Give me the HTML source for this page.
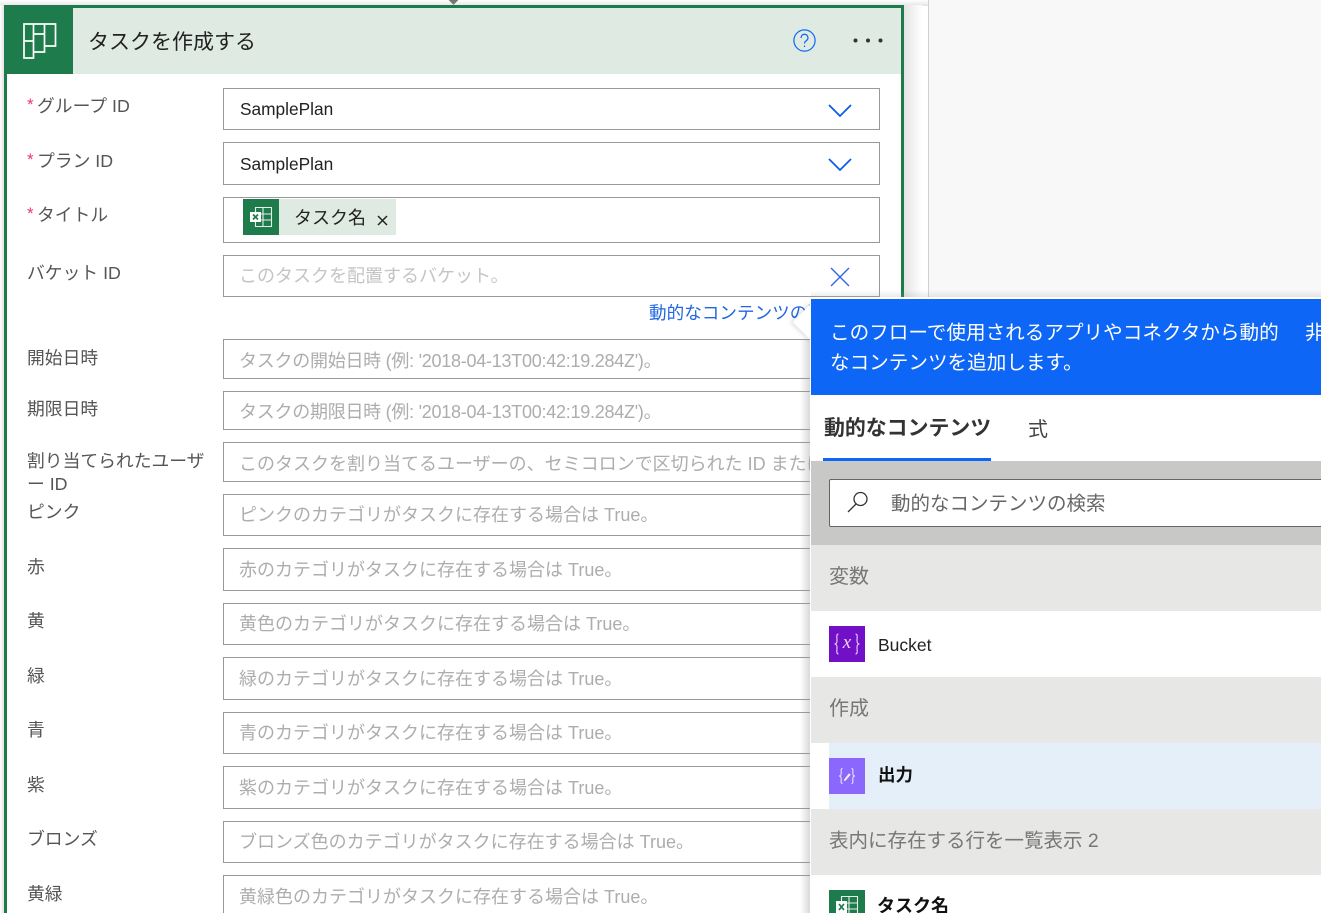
<!DOCTYPE html>
<html lang="ja"><head><meta charset="utf-8">
<style>
html,body{margin:0;padding:0;width:1321px;height:913px;overflow:hidden}
#r{position:absolute;left:0;top:0;width:1321px;height:913px;overflow:hidden;background:#fff;font-family:"Liberation Sans","Noto Sans CJK JP",sans-serif;font-size:17px;color:#333}
div,span.a,svg{position:absolute;box-sizing:border-box}
.t{white-space:nowrap;line-height:22px}
.l{left:27px;color:#555;font-size:17.800px}
.s{color:#e8386f;font-size:17px;left:27px}
.i{left:223px;width:657px;border:1px solid #999;background:#fff}
.p{left:239px;color:#adadad;font-size:18px;white-space:nowrap;line-height:22px}
.sec{left:811px;width:510px;height:66px;background:#e7e8e5}
.sect{left:829px;color:#777;font-size:20px;white-space:nowrap;line-height:24px}
</style></head><body><div id="r">
<div style="left:929px;top:0;width:392px;height:913px;background:#f8f8f8"></div>
<div style="left:928px;top:0;width:1px;height:913px;background:#d0d0d0"></div>
<div style="left:0;top:0;width:928px;height:6px;background:linear-gradient(#fff,#e4e4e4)"></div>
<div style="left:904px;top:5px;width:18px;height:908px;background:linear-gradient(90deg,#e4e4e4,#fff)"></div>
<div style="left:0;top:5px;width:4px;height:908px;background:linear-gradient(90deg,#fff,#e2e2e2)"></div>
<div style="left:449px;top:-6px;width:9px;height:9px;background:#777;transform:rotate(45deg)"></div>

<div style="left:4px;top:5px;width:900px;height:908px;border:3px solid #1e7b4b;border-bottom:0;background:#fff"></div>
<div style="left:7px;top:8px;width:894px;height:66px;background:#deeae2"></div>
<div style="left:7px;top:8px;width:66px;height:66px;background:#1e7b4b"></div>
<svg style="left:23px;top:23px" width="34" height="36" viewBox="0 0 34 36" fill="none" stroke="#fff" stroke-width="1.700"><path d="M1 1H32.500V23H21.500V29H10.500V35H1ZM10.500 1V29M21.500 1V23M1 18H10.500M10.500 11H21.500"/></svg>
<div class="t" style="left:88px;top:30px;font-size:21px;line-height:26px;color:#222">タスクを作成する</div>
<svg style="left:793px;top:29px" width="23" height="23" viewBox="0 0 23 23" fill="none" stroke="#0d66f5" stroke-width="1.200"><circle cx="11.500" cy="11.500" r="10.600"/><path d="M8 9c0-5 7-5 7 0 0 3-3.500 2.500-3.500 5.500"/><path d="M11.500 16.500v1.500"/></svg>
<svg style="left:850px;top:36px" width="36" height="8" viewBox="0 0 36 8" fill="#333"><circle cx="5.500" cy="4.500" r="2"/><circle cx="18" cy="4.500" r="2"/><circle cx="30.500" cy="4.500" r="2"/></svg>

<div class="s t" style="top:94px">*</div><div class="t l" style="left:37px;top:95px">グループ ID</div>
<div class="s t" style="top:149px">*</div><div class="t l" style="left:37px;top:150px">プラン ID</div>
<div class="s t" style="top:203px">*</div><div class="t l" style="left:37px;top:204px">タイトル</div>
<div class="t l" style="top:262px">バケット ID</div>
<div class="t l" style="top:347px">開始日時</div>
<div class="t l" style="top:398px">期限日時</div>
<div class="l" style="top:450px;width:185px;line-height:23px">割り当てられたユーザー ID</div>
<div class="t l" style="top:501px">ピンク</div>
<div class="t l" style="top:556px">赤</div>
<div class="t l" style="top:610px">黄</div>
<div class="t l" style="top:665px">緑</div>
<div class="t l" style="top:719px">青</div>
<div class="t l" style="top:774px">紫</div>
<div class="t l" style="top:828px">ブロンズ</div>
<div class="t l" style="top:883px">黄緑</div>

<div class="i" style="top:88px;height:42px"></div>
<div class="i" style="top:142px;height:43px"></div>
<div class="i" style="top:197px;height:46px"></div>
<div class="i" style="top:255px;height:42px"></div>
<div class="t" style="left:240px;top:98px;font-size:17.300px;color:#222">SamplePlan</div>
<div class="t" style="left:240px;top:153px;font-size:17.300px;color:#222">SamplePlan</div>
<svg style="left:828px;top:103px" width="24" height="15" viewBox="0 0 24 15" fill="none" stroke="#0d5ee8" stroke-width="1.800"><path d="M1 2L12 13L23 2"/></svg>
<svg style="left:828px;top:157px" width="24" height="15" viewBox="0 0 24 15" fill="none" stroke="#0d5ee8" stroke-width="1.800"><path d="M1 2L12 13L23 2"/></svg>
<svg style="left:830px;top:267px" width="20" height="20" viewBox="0 0 20 20" fill="none" stroke="#2f66e8" stroke-width="1.400"><path d="M1 1L19 19M19 1L1 19"/></svg>

<div style="left:243px;top:199px;width:153px;height:36px;background:#deeae2"></div>
<div style="left:243px;top:199px;width:36px;height:36px;background:#1e7b4b"></div>
<svg style="left:243px;top:199px" width="36" height="36" viewBox="0 0 36 36" fill="none"><path d="M12.500 8.500H28.500V27.500H12.500Z M12.500 15H28.500M12.500 21H28.500M20 8.500V27.500" stroke="#e4f0e8" stroke-width="1.100"/><rect x="7" y="13" width="11" height="10" fill="#fff"/><path d="M10 15.500L15 20.500M15 15.500L10 20.500" stroke="#1e7b4b" stroke-width="1.700"/></svg>
<div class="t" style="left:294px;top:207px;font-size:18px;color:#222">タスク名</div>
<svg style="left:377px;top:215px" width="11" height="11" viewBox="0 0 11 11" fill="none" stroke="#222" stroke-width="1.500"><path d="M1 1L10 10M10 1L1 10"/></svg>

<div class="p" style="top:265px;color:#c4c4c4;font-size:18px">このタスクを配置するバケット。</div>
<div class="t" style="left:649px;top:302px;font-size:17.600px;color:#2266e3">動的なコンテンツの追加</div>

<div class="i" style="top:339px;height:40px"></div><div class="p" style="top:350px;letter-spacing:-.26px">タスクの開始日時 (例: '2018-04-13T00:42:19.284Z')。</div>
<div class="i" style="top:391px;height:39px"></div><div class="p" style="top:401px;letter-spacing:-.26px">タスクの期限日時 (例: '2018-04-13T00:42:19.284Z')。</div>
<div class="i" style="top:442px;height:40px"></div><div class="p" style="top:453px">このタスクを割り当てるユーザーの、セミコロンで区切られた ID または</div>
<div class="i" style="top:494px;height:42px"></div><div class="p" style="top:504px">ピンクのカテゴリがタスクに存在する場合は True。</div>
<div class="i" style="top:548px;height:43px"></div><div class="p" style="top:559px">赤のカテゴリがタスクに存在する場合は True。</div>
<div class="i" style="top:603px;height:42px"></div><div class="p" style="top:613px">黄色のカテゴリがタスクに存在する場合は True。</div>
<div class="i" style="top:657px;height:43px"></div><div class="p" style="top:668px">緑のカテゴリがタスクに存在する場合は True。</div>
<div class="i" style="top:712px;height:42px"></div><div class="p" style="top:722px">青のカテゴリがタスクに存在する場合は True。</div>
<div class="i" style="top:766px;height:43px"></div><div class="p" style="top:777px">紫のカテゴリがタスクに存在する場合は True。</div>
<div class="i" style="top:821px;height:42px"></div><div class="p" style="top:831px">ブロンズ色のカテゴリがタスクに存在する場合は True。</div>
<div class="i" style="top:875px;height:42px"></div><div class="p" style="top:886px">黄緑色のカテゴリがタスクに存在する場合は True。</div>

<!-- panel -->
<div style="left:800px;top:340px;width:11px;height:573px;background:linear-gradient(90deg,rgba(150,150,150,0),rgba(150,150,150,.4))"></div>
<div style="left:811px;top:290px;width:510px;height:7px;background:linear-gradient(rgba(150,150,150,0),rgba(150,150,150,.2))"></div>
<div style="left:798px;top:309px;width:26px;height:26px;background:#fff;transform:rotate(45deg);box-shadow:-2px 2px 4px rgba(0,0,0,.12)"></div>
<div style="left:810px;top:297px;width:511px;height:616px;background:#fff"></div>
<div style="left:811px;top:299px;width:510px;height:96px;background:#0d66f5"></div>
<div style="left:830px;top:318px;width:460px;color:#fff;font-size:19.600px;line-height:30px">このフローで使用されるアプリやコネクタから動的なコンテンツを追加します。</div>
<div class="t" style="left:1305px;top:322px;color:#fff;font-size:19.600px">非表示</div>
<div class="t" style="left:824px;top:418px;font-size:20.900px;font-weight:bold;color:#333">動的なコンテンツ</div>
<div class="t" style="left:1028px;top:419px;font-size:20px;color:#444">式</div>
<div style="left:823px;top:458px;width:168px;height:3px;background:#0d66f5"></div>
<div style="left:811px;top:461px;width:510px;height:84px;background:#c8c9c6"></div>
<div style="left:829px;top:479px;width:520px;height:48px;background:#fff;border:1px solid #666;border-radius:2px"></div>
<svg style="left:846px;top:490px" width="24" height="24" viewBox="0 0 24 24" fill="none" stroke="#333" stroke-width="1.300"><circle cx="14.500" cy="9" r="6.500"/><path d="M10 14L2 22"/></svg>
<div class="t" style="left:891px;top:492px;font-size:19.500px;line-height:24px;color:#666">動的なコンテンツの検索</div>

<div class="sec" style="top:545px"></div><div class="sect" style="top:565px">変数</div>
<div style="left:829px;top:626px;width:36px;height:36px;background:#7210c8"></div>
<svg style="left:829px;top:626px" width="36" height="36" viewBox="0 0 36 36" fill="none" stroke="#e6d5f8" stroke-width="1.100"><path d="M9.500 8C7 8 8 11.500 8 14.500C8 16.500 7.500 18 5.500 18C7.500 18 8 19.500 8 21.500C8 24.500 7 28 9.500 28M26.500 8C29 8 28 11.500 28 14.500C28 16.500 28.500 18 30.500 18C28.500 18 28 19.500 28 21.500C28 24.500 29 28 26.500 28"/></svg>
<div class="t" style="left:829px;top:632px;width:36px;text-align:center;color:#e6d5f8;font-family:'Liberation Serif',serif;font-style:italic;font-size:19px">x</div>
<div class="t" style="left:878px;top:634px;font-size:17.500px;color:#222">Bucket</div>

<div class="sec" style="top:677px"></div><div class="sect" style="top:697px">作成</div>
<div style="left:829px;top:743px;width:492px;height:66px;background:#e5eff9"></div>
<div style="left:829px;top:758px;width:36px;height:36px;background:#8c67fb"></div>
<svg style="left:838px;top:768px" width="18" height="16" viewBox="0 0 18 16" fill="none" stroke="#f2edff" stroke-width="1"><path d="M4.500 .5C2.500 .5 3.200 3 3.200 5C3.200 7 2.800 8 1 8C2.800 8 3.200 9 3.200 11C3.200 13 2.500 15.500 4.500 15.500M13.500 .5C15.500 .5 14.800 3 14.800 5C14.800 7 15.200 8 17 8C15.200 8 14.800 9 14.800 11C14.800 13 15.500 15.500 13.500 15.500"/><path d="M6.300 11.500L11 5.500L12.500 6.800L7.500 12.500L6 12.800Z" fill="#f2edff" stroke-width=".4"/></svg>
<div class="t" style="left:878px;top:764px;font-size:17.500px;font-weight:bold;color:#111">出力</div>

<div class="sec" style="top:809px"></div><div class="sect" style="top:829px;font-size:19.500px">表内に存在する行を一覧表示 2</div>
<div style="left:829px;top:890px;width:36px;height:36px;background:#1e7b4b"></div>
<svg style="left:829px;top:890px" width="36" height="36" viewBox="0 0 36 36" fill="none"><path d="M12.500 6.500H28.500V25.500H12.500Z M12.500 13H28.500M12.500 19H28.500M20 6.500V25.500" stroke="#e4f0e8" stroke-width="1.100"/><rect x="7" y="11" width="11" height="12" fill="#fff"/><path d="M10 14L15 20M15 14L10 20" stroke="#1e7b4b" stroke-width="1.700"/></svg>
<div class="t" style="left:877px;top:895px;font-size:18px;font-weight:bold;color:#111">タスク名</div>
</div></body></html>
